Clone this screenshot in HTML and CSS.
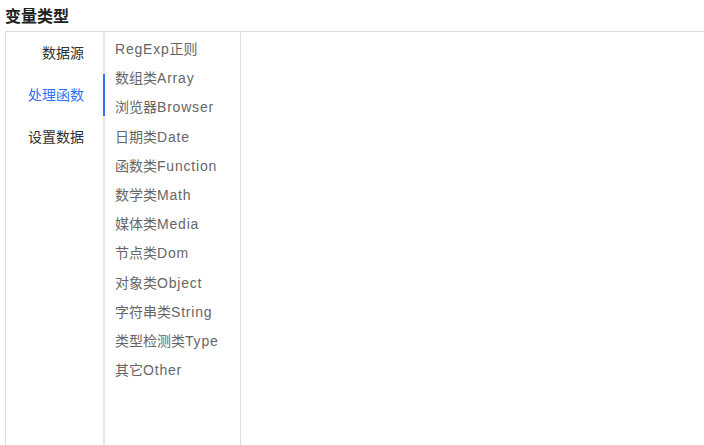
FILE: index.html
```html
<!DOCTYPE html>
<html lang="zh">
<head>
<meta charset="utf-8">
<link rel="stylesheet" href="styles.css">
</head>
<body>
<div class="page">
  <h3 class="title">变量类型</h3>
  <div class="box">
    <div class="tabs">
      <div class="tab">数据源</div>
      <div class="tab active">处理函数</div>
      <div class="tab">设置数据</div>
    </div>
    <ul class="list">
      <li><span class="en">RegExp</span>正则</li>
      <li>数组类<span class="en">Array</span></li>
      <li>浏览器<span class="en">Browser</span></li>
      <li>日期类<span class="en">Date</span></li>
      <li>函数类<span class="en">Function</span></li>
      <li>数学类<span class="en">Math</span></li>
      <li>媒体类<span class="en">Media</span></li>
      <li>节点类<span class="en">Dom</span></li>
      <li>对象类<span class="en">Object</span></li>
      <li>字符串类<span class="en">String</span></li>
      <li>类型检测类<span class="en">Type</span></li>
      <li>其它<span class="en">Other</span></li>
    </ul>
    <div class="content"></div>
  </div>
</div>
</body>
</html>
```
FILE: styles.css
```css
html, body {
  margin: 0;
  padding: 0;
  background: #fff;
  overflow: hidden;
}
body {
  font-family: "Liberation Sans", "Noto Sans CJK SC", sans-serif;
}
.page {
  padding: 6px 0 0 5px;
  height: 439px;
  display: flex;
  flex-direction: column;
}
.title {
  margin: 0 0 3px 0;
  font-size: 16px;
  line-height: 22px;
  font-weight: bold;
  color: #222;
}
.box {
  flex: 1;
  display: flex;
  border-top: 1px solid #dcdcdc;
  border-left: 1px solid #dcdcdc;
}
.tabs {
  width: 97px;
  border-right: 2px solid #e4e7ed;
  display: flex;
  flex-direction: column;
}
.tab {
  height: 42px;
  line-height: 42px;
  text-align: right;
  padding-right: 19px;
  font-size: 14px;
  color: #303133;
  margin-right: -2px;
  border-right: 2px solid transparent;
}
.tab.active {
  color: #3370ff;
  border-right-color: #3370ff;
}
.list {
  list-style: none;
  margin: 0;
  padding: 3px 0 0 10px;
  width: 125px;
  border-right: 1px solid #dcdcdc;
}
.list li {
  height: 29.2px;
  line-height: 29.2px;
  font-size: 14px;
  color: #666;
  white-space: nowrap;
}
.en {
  letter-spacing: 0.8px;
}
.content {
  flex: 1;
}
```
